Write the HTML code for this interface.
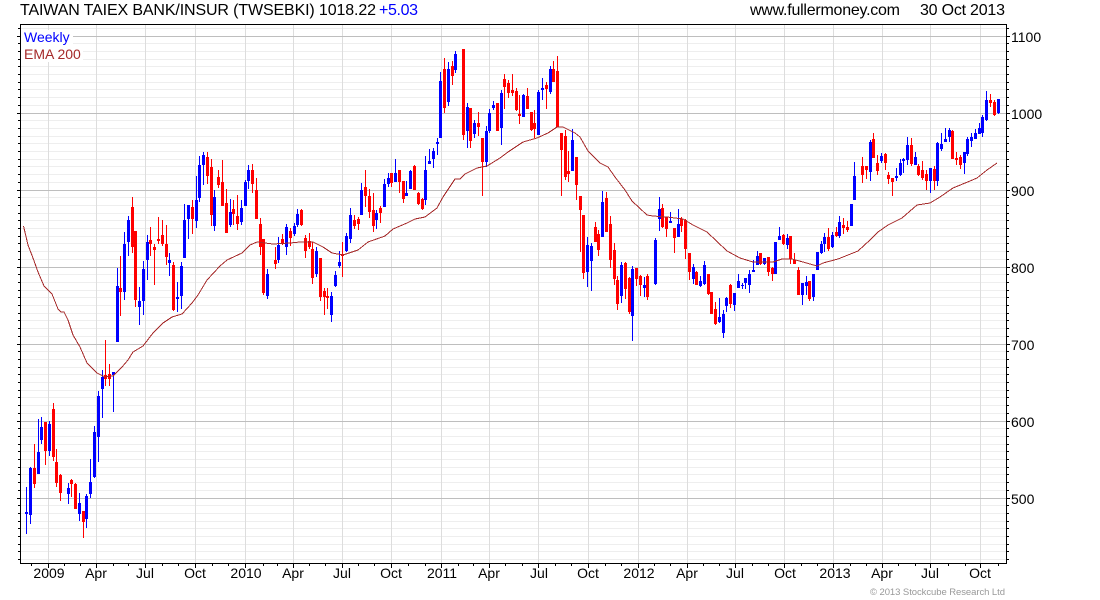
<!DOCTYPE html>
<html><head><meta charset="utf-8"><title>TWSEBKI</title>
<style>
html,body{margin:0;padding:0;background:#fff;width:1100px;height:600px;overflow:hidden}
svg{display:block}
text{font-family:"Liberation Sans",sans-serif}
</style></head><body>
<svg width="1100" height="600" viewBox="0 0 1100 600" xmlns="http://www.w3.org/2000/svg">
<rect width="1100" height="600" fill="#fff"/>
<g shape-rendering="crispEdges" fill="none">
<path stroke="#eee" d="M21 28.5H1006M21 43.5H1006M21 51.5H1006M21 59.5H1006M21 66.5H1006M21 74.5H1006M21 82.5H1006M21 89.5H1006M21 97.5H1006M21 105.5H1006M21 120.5H1006M21 128.5H1006M21 136.5H1006M21 143.5H1006M21 151.5H1006M21 159.5H1006M21 166.5H1006M21 174.5H1006M21 182.5H1006M21 197.5H1006M21 205.5H1006M21 213.5H1006M21 220.5H1006M21 228.5H1006M21 236.5H1006M21 243.5H1006M21 251.5H1006M21 259.5H1006M21 274.5H1006M21 282.5H1006M21 290.5H1006M21 297.5H1006M21 305.5H1006M21 313.5H1006M21 320.5H1006M21 328.5H1006M21 336.5H1006M21 351.5H1006M21 359.5H1006M21 367.5H1006M21 374.5H1006M21 382.5H1006M21 390.5H1006M21 397.5H1006M21 405.5H1006M21 413.5H1006M21 428.5H1006M21 436.5H1006M21 444.5H1006M21 451.5H1006M21 459.5H1006M21 467.5H1006M21 474.5H1006M21 482.5H1006M21 490.5H1006M21 505.5H1006M21 513.5H1006M21 521.5H1006M21 528.5H1006M21 536.5H1006M21 544.5H1006M21 551.5H1006M21 559.5H1006"/>
<path stroke="#ddd" d="M48.5 25V563M96.5 25V563M145.5 25V563M195.5 25V563M245.5 25V563M293.5 25V563M342.5 25V563M391.5 25V563M441.5 25V563M489.5 25V563M538.5 25V563M588.5 25V563M638.5 25V563M687.5 25V563M735.5 25V563M784.5 25V563M833.5 25V563M882.5 25V563M930.5 25V563M980.5 25V563"/>
<path stroke="#bebebe" d="M21 36.5H1006M21 113.5H1006M21 190.5H1006M21 267.5H1006M21 344.5H1006M21 421.5H1006M21 498.5H1006"/>
</g>
<rect x="21" y="30" width="52" height="16" fill="#fff"/>
<rect x="21" y="46" width="62" height="16" fill="#fff"/>
<g shape-rendering="crispEdges" fill="none">
<!-- blue wicks -->
<path stroke="#00f" stroke-width="1" d="M26.5 487V534M30.5 467V524M38.5 419V474M41.5 417V444M49.5 421V456M68.5 483V504M79.5 493V521M86.5 494V528M90.5 459V498M94.5 426V478M98.5 391V462M102.5 370V418M113.5 372V412M117.5 268V342M124.5 232V300M128.5 216V256M139.5 287V325M143.5 261V315M147.5 235V280M169.5 253V276M177.5 282V312M181.5 262V309M184.5 204V258M188.5 205V239M196.5 176V228M199.5 156V202M203.5 152V185M214.5 190V231M230.5 199V227M241.5 200V225M245.5 180V206M248.5 165V189M267.5 269V299M278.5 237V263M286.5 224V255M294.5 223V236M297.5 209V227M316.5 247V277M331.5 292V322M335.5 271V287M339.5 251V268M346.5 233V252M350.5 208V243M361.5 183V215M376.5 210V229M384.5 179V207M388.5 173V187M395.5 159V182M406.5 181V196M410.5 170V189M425.5 156V205M429.5 149V164M433.5 148V168M437.5 138V155M440.5 72V138M448.5 62V106M455.5 51V73M467.5 103V148M474.5 120V138M486.5 126V167M489.5 109V133M493.5 101V110M501.5 90V145M523.5 94V117M538.5 90V135M542.5 78V100M550.5 66V94M572.5 129V171M587.5 237V287M591.5 243V291M602.5 191V237M621.5 262V303M632.5 266V341M644.5 277V297M655.5 238V285M659.5 197V231M670.5 212V223M678.5 209V237M693.5 264V284M700.5 276V287M704.5 261V285M719.5 298V323M723.5 310V338M726.5 297V312M734.5 293V311M738.5 274V288M742.5 283V289M745.5 278V289M749.5 270V293M753.5 260V272M757.5 251V265M764.5 258V265M775.5 242V274M779.5 227V240M787.5 234V249M802.5 283V305M806.5 276V295M813.5 274V301M817.5 252V270M821.5 241V254M824.5 233V252M832.5 232V248M839.5 216V238M851.5 204V226M854.5 162V200M870.5 140V181M881.5 153V163M896.5 168V181M900.5 159V176M903.5 158V173M907.5 137V165M915.5 152V165M930.5 168V193M937.5 142V186M941.5 133V151M945.5 128V142M949.5 128V142M964.5 152V174M967.5 137V156M971.5 133V147M975.5 129V139M979.5 123V134M982.5 115V137M986.5 91V121M998.5 99V114"/>
<!-- blue bodies -->
<path stroke="#00f" stroke-width="3" d="M26.5 512V514M30.5 468V515M38.5 452V474M41.5 427V440M49.5 424V451M68.5 488V494M79.5 503V514M86.5 496V519M90.5 482V494M94.5 432V477M98.5 396V437M102.5 377V389M113.5 372V375M117.5 286V342M124.5 244V292M128.5 220V242M139.5 301V307M143.5 269V301M147.5 242V260M169.5 260V263M177.5 297V299M181.5 266V296M184.5 220V258M188.5 205V219M196.5 200V221M199.5 165V198M203.5 155V165M214.5 197V226M230.5 212V225M241.5 208V222M245.5 182V206M248.5 170V181M267.5 274V296M278.5 245V260M286.5 227V247M294.5 226V234M297.5 214V225M316.5 251V274M331.5 296V315M335.5 275V286M339.5 262V266M346.5 236V251M350.5 215V239M361.5 190V215M376.5 213V220M384.5 184V207M388.5 178V184M395.5 173V182M406.5 193V196M410.5 171V189M425.5 170V200M429.5 161V164M433.5 151V159M437.5 142V144M440.5 81V138M448.5 69V102M455.5 54V70M467.5 107V131M474.5 123V134M486.5 131V162M489.5 113V131M493.5 105V108M501.5 93V128M523.5 95V117M538.5 92V135M542.5 88V90M550.5 69V92M572.5 140V171M587.5 245V272M591.5 246V261M602.5 202V237M621.5 265V296M632.5 269V316M644.5 285V288M655.5 240V284M659.5 209V219M670.5 221V223M678.5 224V237M693.5 267V279M700.5 281V286M704.5 265V284M719.5 317V322M723.5 314V333M726.5 298V306M734.5 293V305M738.5 281V288M742.5 285V286M745.5 278V283M749.5 274V285M753.5 270V272M757.5 256V265M764.5 258V264M775.5 242V274M779.5 236V240M787.5 238V245M802.5 283V295M806.5 282V286M813.5 274V297M817.5 252V270M821.5 244V253M824.5 237V244M832.5 235V247M839.5 222V236M851.5 204V226M854.5 176V200M870.5 142V172M881.5 156V161M896.5 176V178M900.5 163V175M903.5 159V161M907.5 145V160M915.5 157V165M930.5 168V181M937.5 143V181M941.5 144V149M945.5 139V142M949.5 130V137M964.5 152V163M967.5 139V154M971.5 137V141M975.5 133V139M979.5 128V134M982.5 117V133M986.5 100V120M998.5 99V113"/>
<!-- red wicks -->
<path stroke="#f00" stroke-width="1" d="M34.5 444V488M45.5 422V465M53.5 403V461M56.5 449V487M60.5 474V501M71.5 479V497M75.5 483V509M83.5 511V538M105.5 340V386M109.5 364V386M120.5 256V316M132.5 197V253M135.5 231V307M150.5 227V256M154.5 244V285M158.5 217V244M162.5 220V246M166.5 225V265M173.5 262V311M192.5 200V234M207.5 152V184M211.5 159V226M218.5 170V188M222.5 160V206M226.5 189V233M233.5 200V225M237.5 195V230M252.5 164V193M256.5 178V219M260.5 218V255M263.5 239V295M275.5 247V269M282.5 234V245M290.5 228V246M301.5 209V226M305.5 235V258M309.5 233V249M312.5 242V284M320.5 258V301M324.5 288V315M327.5 288V309M342.5 242V277M354.5 215V229M358.5 217V230M365.5 170V207M369.5 189V218M373.5 193V232M380.5 206V223M391.5 173V187M399.5 170V193M403.5 181V203M414.5 165V190M418.5 192V205M422.5 198V210M444.5 58V113M452.5 61V85M463.5 49V140M470.5 108V148M478.5 112V136M482.5 138V196M497.5 103V131M504.5 74V109M508.5 80V98M512.5 74V96M516.5 88V111M519.5 95V124M527.5 88V109M531.5 112V131M534.5 110V138M546.5 82V109M553.5 61V82M557.5 56V127M561.5 133V196M565.5 130V180M568.5 151V182M576.5 157V200M580.5 196V252M583.5 215V279M595.5 222V242M598.5 230V256M606.5 192V232M610.5 216V268M614.5 243V285M617.5 276V310M625.5 262V299M629.5 277V314M636.5 268V286M640.5 275V296M647.5 274V300M662.5 204V228M666.5 217V237M674.5 228V253M681.5 217V232M685.5 219V259M689.5 253V280M696.5 271V285M708.5 274V295M711.5 292V314M715.5 302V325M730.5 284V308M760.5 253V265M768.5 257V276M772.5 267V281M783.5 234V245M790.5 236V264M794.5 253V264M798.5 267V295M809.5 281V301M828.5 228V251M836.5 227V237M843.5 218V234M847.5 221V232M862.5 157V183M866.5 166V179M873.5 133V158M877.5 155V175M885.5 153V170M888.5 172V184M892.5 178V196M911.5 138V166M918.5 164V176M922.5 161V180M926.5 170V190M934.5 166V190M952.5 130V159M956.5 152V165M960.5 155V169M990.5 94V107M994.5 100V116"/>
<!-- red bodies -->
<path stroke="#f00" stroke-width="3" d="M34.5 468V484M45.5 422V451M53.5 409V457M56.5 462V483M60.5 475V493M71.5 480V484M75.5 484V509M83.5 511V522M105.5 375V379M109.5 374V379M120.5 288V292M132.5 207V247M135.5 231V300M150.5 240V244M154.5 247V250M158.5 239V241M162.5 235V244M166.5 244V257M173.5 265V310M192.5 207V219M207.5 157V176M211.5 167V215M218.5 177V185M222.5 182V206M226.5 203V233M233.5 209V214M237.5 216V224M252.5 170V184M256.5 190V219M260.5 224V247M263.5 239V293M275.5 260V264M282.5 239V244M290.5 231V238M301.5 210V225M305.5 238V251M309.5 241V247M312.5 249V278M320.5 258V297M324.5 291V297M327.5 296V298M342.5 254V256M354.5 220V226M358.5 219V224M365.5 187V196M369.5 196V212M373.5 210V226M380.5 208V213M391.5 173V183M399.5 170V182M403.5 181V199M414.5 166V190M418.5 193V204M422.5 199V209M444.5 69V108M452.5 66V76M463.5 49V135M470.5 108V141M478.5 123V127M482.5 138V162M497.5 103V131M504.5 79V87M508.5 83V93M512.5 90V93M516.5 91V110M519.5 114V116M527.5 96V109M531.5 112V130M534.5 123V129M546.5 85V89M553.5 69V82M557.5 71V127M561.5 133V150M565.5 136V177M568.5 171V174M576.5 157V185M580.5 196V210M583.5 215V273M595.5 227V242M598.5 234V250M606.5 198V232M610.5 224V260M614.5 250V279M617.5 280V304M625.5 263V289M629.5 278V312M636.5 268V279M640.5 276V285M647.5 276V297M662.5 208V227M666.5 217V229M674.5 228V238M681.5 219V226M685.5 220V249M689.5 253V272M696.5 272V285M708.5 274V294M711.5 292V314M715.5 309V324M730.5 285V304M760.5 253V264M768.5 257V272M772.5 268V274M783.5 235V244M790.5 236V259M794.5 260V264M798.5 270V295M809.5 281V299M828.5 237V249M836.5 232V236M843.5 225V228M847.5 227V230M862.5 166V175M866.5 166V170M873.5 139V158M877.5 163V171M885.5 154V163M888.5 175V179M892.5 178V182M911.5 145V164M918.5 166V175M922.5 170V178M926.5 174V181M934.5 169V181M952.5 131V159M956.5 158V160M960.5 157V165M990.5 100V103M994.5 102V115"/>
<!-- EMA -->
<polyline stroke="#a52a2a" stroke-width="1" points="23.5,226 28,245 33,258 38,272 44,286 52,294 58,309 61,312 64,312 68,320 73,335 80,347 87,363 97,373 105,377 113,376 122,367 128,360 133,352 143,346 153,333 163,323 172,317 182,314 192,303 198,295 207,280 220,266 227,260 242,253 250,245 257,242 273,244 290,243 300,242 313,242 323,247 332,253 343,255 358,250 368,242 385,236 393,229 407,223 415,219 425,217 437,208 443,197 455,179 460,179 465,174 477,168 487,166 500,158 508,152 523,142 537,138 548,133 557,127 563,127 575,133 580,137 588,151 593,156 600,163 608,167 615,177 625,190 632,201 647,215 653,216 667,217 683,219 693,225 707,232 727,251 740,258 753,262 773,262 782,259 792,259 803,262 817,266 823,263 838,259 858,251 870,240 878,232 888,225 902,218 917,205 930,203 940,197 953,188 970,181 977,178 987,170 997,163"/>
<!-- frame -->
<path stroke="#000" d="M20.5 24.5H1006.5V563.5H20.5Z"/>
<!-- left/right ticks -->
<path stroke="#000" d="M18 28.5H20M18 43.5H20M18 51.5H20M18 59.5H20M18 66.5H20M18 74.5H20M18 82.5H20M18 89.5H20M18 97.5H20M18 105.5H20M18 120.5H20M18 128.5H20M18 136.5H20M18 143.5H20M18 151.5H20M18 159.5H20M18 166.5H20M18 174.5H20M18 182.5H20M18 197.5H20M18 205.5H20M18 213.5H20M18 220.5H20M18 228.5H20M18 236.5H20M18 243.5H20M18 251.5H20M18 259.5H20M18 274.5H20M18 282.5H20M18 290.5H20M18 297.5H20M18 305.5H20M18 313.5H20M18 320.5H20M18 328.5H20M18 336.5H20M18 351.5H20M18 359.5H20M18 367.5H20M18 374.5H20M18 382.5H20M18 390.5H20M18 397.5H20M18 405.5H20M18 413.5H20M18 428.5H20M18 436.5H20M18 444.5H20M18 451.5H20M18 459.5H20M18 467.5H20M18 474.5H20M18 482.5H20M18 490.5H20M18 505.5H20M18 513.5H20M18 521.5H20M18 528.5H20M18 536.5H20M18 544.5H20M18 551.5H20M18 559.5H20M17 36.5H20M17 113.5H20M17 190.5H20M17 267.5H20M17 344.5H20M17 421.5H20M17 498.5H20"/>
<path stroke="#000" d="M1007 28.5H1009M1007 43.5H1009M1007 51.5H1009M1007 59.5H1009M1007 66.5H1009M1007 74.5H1009M1007 82.5H1009M1007 89.5H1009M1007 97.5H1009M1007 105.5H1009M1007 120.5H1009M1007 128.5H1009M1007 136.5H1009M1007 143.5H1009M1007 151.5H1009M1007 159.5H1009M1007 166.5H1009M1007 174.5H1009M1007 182.5H1009M1007 197.5H1009M1007 205.5H1009M1007 213.5H1009M1007 220.5H1009M1007 228.5H1009M1007 236.5H1009M1007 243.5H1009M1007 251.5H1009M1007 259.5H1009M1007 274.5H1009M1007 282.5H1009M1007 290.5H1009M1007 297.5H1009M1007 305.5H1009M1007 313.5H1009M1007 320.5H1009M1007 328.5H1009M1007 336.5H1009M1007 351.5H1009M1007 359.5H1009M1007 367.5H1009M1007 374.5H1009M1007 382.5H1009M1007 390.5H1009M1007 397.5H1009M1007 405.5H1009M1007 413.5H1009M1007 428.5H1009M1007 436.5H1009M1007 444.5H1009M1007 451.5H1009M1007 459.5H1009M1007 467.5H1009M1007 474.5H1009M1007 482.5H1009M1007 490.5H1009M1007 505.5H1009M1007 513.5H1009M1007 521.5H1009M1007 528.5H1009M1007 536.5H1009M1007 544.5H1009M1007 551.5H1009M1007 559.5H1009M1007 36.5H1010M1007 113.5H1010M1007 190.5H1010M1007 267.5H1010M1007 344.5H1010M1007 421.5H1010M1007 498.5H1010"/>
<!-- bottom ticks -->
<path stroke="#000" d="M48.5 564V568M96.5 564V568M145.5 564V568M195.5 564V568M245.5 564V568M293.5 564V568M342.5 564V568M391.5 564V568M441.5 564V568M489.5 564V568M538.5 564V568M588.5 564V568M638.5 564V568M687.5 564V568M735.5 564V568M784.5 564V568M833.5 564V568M882.5 564V568M930.5 564V568M980.5 564V568M31.5 564V566M64.5 564V566M80.5 564V566M113.5 564V566M128.5 564V566M162.5 564V566M178.5 564V566M212.5 564V566M228.5 564V566M263.5 564V566M277.5 564V566M309.5 564V566M325.5 564V566M358.5 564V566M374.5 564V566M408.5 564V566M425.5 564V566M458.5 564V566M473.5 564V566M505.5 564V566M522.5 564V566M555.5 564V566M571.5 564V566M605.5 564V566M621.5 564V566M654.5 564V566M670.5 564V566M703.5 564V566M719.5 564V566M752.5 564V566M768.5 564V566M801.5 564V566M817.5 564V566M850.5 564V566M866.5 564V566M898.5 564V566M915.5 564V566M948.5 564V566M965.5 564V566M998.5 564V566"/>
</g>
<!-- header -->
<text x="20" y="15" font-size="16" fill="#000" textLength="356" lengthAdjust="spacing">TAIWAN TAIEX BANK/INSUR (TWSEBKI) 1018.22</text>
<text x="379" y="15" font-size="16" fill="#00f" textLength="39" lengthAdjust="spacing">+5.03</text>
<text x="750" y="15" font-size="16" fill="#000" textLength="150" lengthAdjust="spacing">www.fullermoney.com</text>
<text x="920" y="15" font-size="16" fill="#000" textLength="85" lengthAdjust="spacing">30 Oct 2013</text>
<!-- legend -->
<text x="24" y="42" font-size="14" fill="#00f">Weekly</text>
<text x="24" y="59" font-size="14" fill="#a52a2a">EMA 200</text>
<!-- y labels -->
<g font-size="14" fill="#000">
<text x="1011" y="42">1100</text>
<text x="1011" y="119">1000</text>
<text x="1011" y="196">900</text>
<text x="1011" y="273">800</text>
<text x="1011" y="350">700</text>
<text x="1011" y="427">600</text>
<text x="1011" y="504">500</text>
</g>
<!-- x labels -->
<g font-size="14" fill="#000" text-anchor="middle">
<text x="49" y="578">2009</text>
<text x="96" y="578">Apr</text>
<text x="145" y="578">Jul</text>
<text x="195" y="578">Oct</text>
<text x="246" y="578">2010</text>
<text x="293" y="578">Apr</text>
<text x="342" y="578">Jul</text>
<text x="391" y="578">Oct</text>
<text x="442" y="578">2011</text>
<text x="489" y="578">Apr</text>
<text x="539" y="578">Jul</text>
<text x="588" y="578">Oct</text>
<text x="639" y="578">2012</text>
<text x="687" y="578">Apr</text>
<text x="735" y="578">Jul</text>
<text x="785" y="578">Oct</text>
<text x="835" y="578">2013</text>
<text x="882" y="578">Apr</text>
<text x="930" y="578">Jul</text>
<text x="980" y="578">Oct</text>
</g>
<text x="870" y="595" font-size="9.5" fill="#999" textLength="135" lengthAdjust="spacing">© 2013 Stockcube Research Ltd</text>
</svg>
</body></html>
